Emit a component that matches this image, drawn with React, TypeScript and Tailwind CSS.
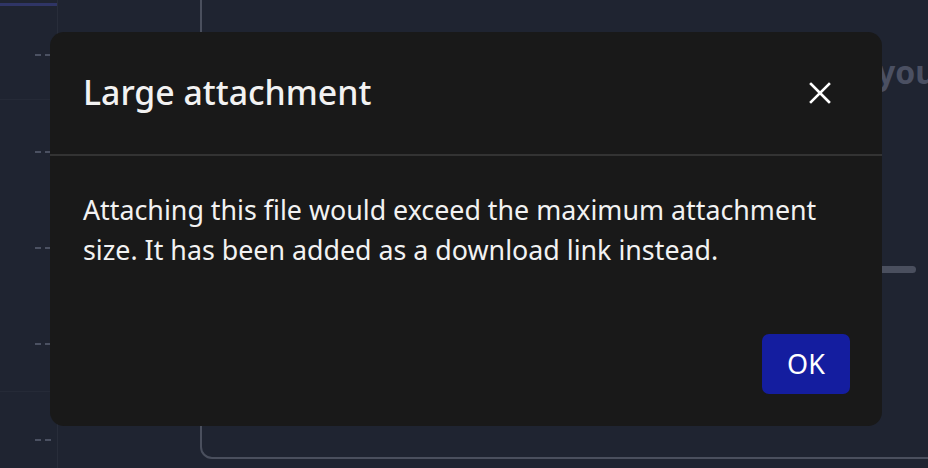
import React from 'react'

const dashRows = [
  { y: 152, line: false },
  { y: 247, line: false },
  { y: 343, line: true },
  { y: 439, line: false },
]

const Dashes = () => (
  <>
    <span className="h-[2px] w-[6px] bg-[#4b5162]" />
    <span className="h-[2px] w-[6px] bg-[#4b5162]" />
  </>
)

const Sidebar = () => (
  <div className="h-full w-[58px] shrink-0 border-r border-[#282d3a] bg-[#1f2431]">
    <div className="mt-[3px] h-[3px] w-full bg-[#2f3566]" />
    <div className="flex h-[94px] items-center justify-end gap-[4px] border-b border-[#252a37] pr-[6px] pt-[4px]">
      <Dashes />
    </div>
    <div className="flex flex-col pt-[4px]">
      {dashRows.map((r) => (
        <div key={r.y} className={`flex h-[96px] items-center justify-end gap-[4px] pr-[6px] ${r.line ? 'border-b border-[#252a37]' : ''}`}>
          <Dashes />
        </div>
      ))}
    </div>
  </div>
)

const CloseIcon = () => (
  <svg width="22" height="22" viewBox="0 0 22 22" fill="none" stroke="white" strokeWidth="2.6" strokeLinecap="square">
    <path d="M2 2 L20 20 M20 2 L2 20" />
  </svg>
)

export default function App() {
  return (
    <div className="relative flex h-[468px] w-[928px] overflow-hidden bg-[#1f2431]" style={{ fontFamily: '"Noto Sans", sans-serif' }}>
      <Sidebar />
      <div className="flex-1 pl-[142px]">
        <div className="-mr-[20px] -mt-[20px] h-[479px] rounded-b-[12px] border-2 border-[#4a4f5d] bg-[#1f2431] pt-[66px]">
          <div className="flex justify-end pr-[10px]">
            <h2 className="whitespace-nowrap text-[32px] font-bold leading-[48px] text-[#4b5062]">What would you</h2>
          </div>
          <div className="mt-[170px] flex justify-end pr-[30px]">
            <div className="h-[7px] w-[260px] rounded-full bg-[#4a4f5e]" />
          </div>
        </div>
      </div>

      {/* modal */}
      <div className="absolute left-[50px] top-[32px] flex h-[394px] w-[832px] flex-col rounded-[14px] bg-[#191919] text-[#f2f2f2]">
        <div className="flex h-[124px] items-center justify-between border-b-2 border-[#333333] pl-[33px] pr-[51px]">
          <h1 className="text-[33.8px] font-medium leading-none">Large attachment</h1>
          <CloseIcon />
        </div>
        <div className="px-[33px] pt-[34px] text-[26.8px] leading-[40px]">
          Attaching this file would exceed the maximum attachment size. It has been added as a download link instead.
        </div>
        <div className="mt-auto flex justify-end pb-[32px] pr-[32px]">
          <button className="h-[60px] w-[88px] rounded-[7px] bg-[#141d9f] text-[27px] text-white">OK</button>
        </div>
      </div>
    </div>
  )
}
